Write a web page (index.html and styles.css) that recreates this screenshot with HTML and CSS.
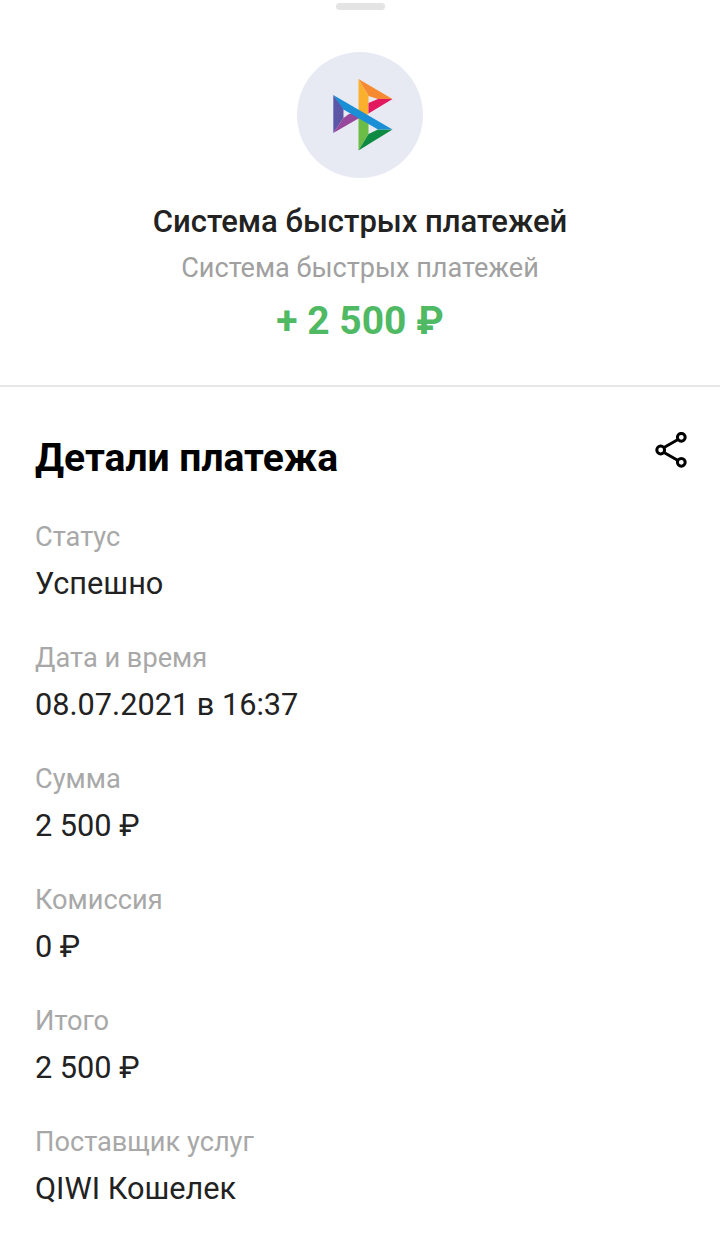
FILE: index.html
```html
<html>
    <head>
        <meta charset="utf-8">
        <meta name="viewport" content="width=device-width, initial-scale=1.0">
        <link rel="stylesheet" href="styles.css">
    </head>
    <body>
        <div class="handle"></div>
        <div class="summary">
            <div class="logo">
                <svg viewBox="-5 0 65 72" width="65" height="72">
                    <!-- upper triangle -->
                    <path d="M 25.5 0 L 59.5 20 L 45 20 L 35.5 17 z" fill="#f58a33" />
                    <path d="M 25.5 0 L 35.5 17 L 35.5 35 L 25.5 41 z" fill="#fbb02d" />
                    <path d="M 59.5 20 L 35.5 34.5 L 35.5 24 L 45 20 z" fill="#e2195f" />
                    <!-- lower triangle -->
                    <path d="M 25.5 38 L 35.5 44 L 35.5 55 L 25.5 71.5 z" fill="#6cbd45" />
                    <path d="M 59.5 50.5 L 25.5 71.5 L 35.5 55 L 45 50.5 z" fill="#0f8a42" />
                    <!-- left triangle -->
                    <path d="M 0.3 16 L 10.5 29 L 10.5 39 L 0.3 54 z" fill="#5b57a6" />
                    <path d="M 0.3 54 L 10.5 39 L 16 35 L 25.5 33 L 28 38 z" fill="#97479c" />
                    <path d="M 0.3 16 L 59.5 50.5 L 45 50.5 L 10.5 30.5 z" fill="#1a8fd6" />
                </svg>
            </div>
            <div class="name">Система быстрых платежей</div>
            <div class="subname">Система быстрых платежей</div>
            <div class="amount">+ 2 500 ₽</div>
        </div>
        <div class="details">
            <div class="details-head">
                <h1>Детали платежа</h1>
                <svg class="share" viewBox="0 0 34 36" width="34" height="36" fill="none" stroke="#000" stroke-width="3">
                    <path d="M 10 15.5 L 24 7.5 M 10 20.5 L 24 28.5" />
                    <circle cx="6.7" cy="18" r="3.9" />
                    <circle cx="27.3" cy="5.3" r="3.9" />
                    <circle cx="27.3" cy="30.3" r="3.9" />
                </svg>
            </div>
            <div class="row">
                <div class="label">Статус</div>
                <div class="value">Успешно</div>
            </div>
            <div class="row">
                <div class="label">Дата и время</div>
                <div class="value">08.07.2021 в 16:37</div>
            </div>
            <div class="row">
                <div class="label">Сумма</div>
                <div class="value">2 500 ₽</div>
            </div>
            <div class="row">
                <div class="label">Комиссия</div>
                <div class="value">0 ₽</div>
            </div>
            <div class="row">
                <div class="label">Итого</div>
                <div class="value">2 500 ₽</div>
            </div>
            <div class="row">
                <div class="label">Поставщик услуг</div>
                <div class="value">QIWI Кошелек</div>
            </div>
        </div>
    </body>
</html>
```

FILE: styles.css
```css
body{
    margin: 0;
    background-color: #fff;
    font-family: Roboto, sans-serif;
    color: #222;
}
.handle{
    width: 49px;
    height: 7px;
    margin: 3px auto 0;
    border-radius: 4px;
    background-color: #e4e4e4;
}
.summary{
    display: flex;
    flex-direction: column;
    align-items: center;
    padding-top: 42px;
    height: 333px;
    box-sizing: content-box;
    border-bottom: 2px solid #e6e6e6;
}
.logo{
    width: 126px;
    height: 126px;
    border-radius: 50%;
    background-color: #e8eaf3;
    display: flex;
    align-items: center;
    justify-content: center;
}
.name{
    margin-top: 25px;
    font-size: 31px;
    line-height: 38px;
    font-weight: 500;
}
.subname{
    margin-top: 9px;
    font-size: 27.1px;
    line-height: 36px;
    color: #a0a0a0;
}
.amount{
    margin-top: 13px;
    font-size: 39px;
    line-height: 44px;
    font-weight: 700;
    color: #4fb964;
}
.details{
    padding: 0 32px 0 35px;
}
.details-head{
    display: flex;
    justify-content: space-between;
    align-items: flex-start;
    margin-top: 46px;
    height: 87px;
}
.details-head h1{
    margin: 0;
    font-size: 39px;
    line-height: 50px;
    font-weight: 700;
    color: #000;
}
.share{
    margin-top: -1px;
}
.row{
    height: 121px;
}
.label{
    font-size: 27.2px;
    line-height: 34px;
    color: #a8a8a8;
}
.value{
    margin-top: 11px;
    font-size: 30.7px;
    line-height: 38px;
    color: #222;
}
```
